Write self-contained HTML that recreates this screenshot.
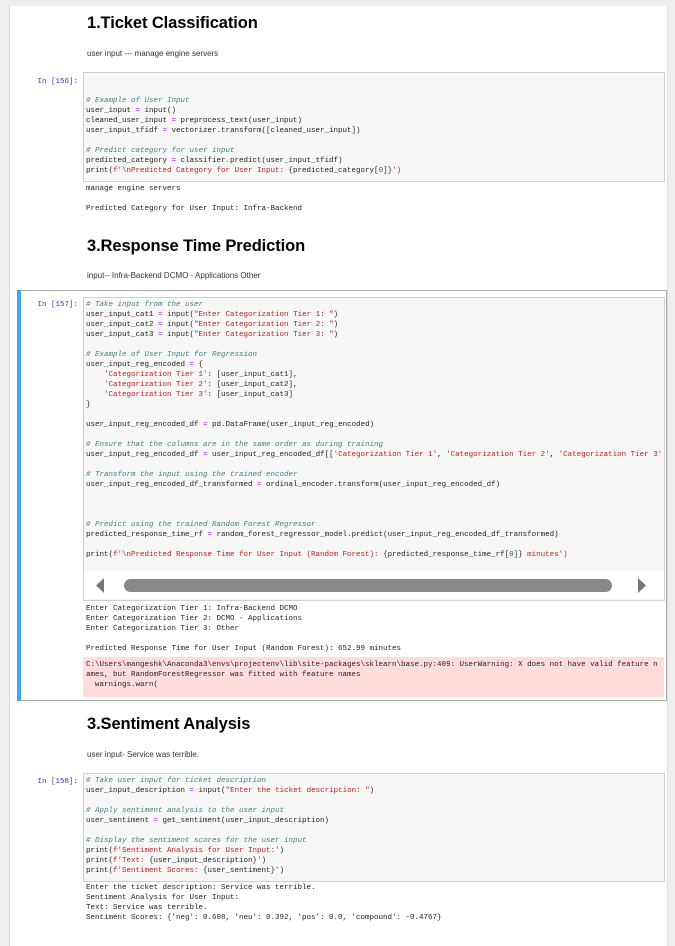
<!DOCTYPE html>
<html><head><meta charset="utf-8"><style>
body{margin:0;width:675px;height:932px;background:#eee;position:relative;overflow:hidden;font-family:"Liberation Sans",sans-serif}
.nb{position:absolute;left:9px;top:6px;width:657px;height:940px;background:#fff;border-left:1px solid #ddd;border-right:1px solid #ddd}
.a{position:absolute}
h1{position:absolute;margin:0;font-size:16.5px;font-weight:bold;color:#000;left:87px;line-height:20px;letter-spacing:-0.1px}
.p{position:absolute;left:87px;font-size:8px;color:#333;line-height:10px}
.box{position:absolute;left:83px;width:580px;background:#f7f7f7;border:1px solid #cfcfcf}
pre{position:absolute;margin:0;left:86px;font-family:"Liberation Mono",monospace;font-size:7.5px;line-height:10px;color:#222;white-space:pre}
.pr{position:absolute;font-family:"Liberation Mono",monospace;font-size:7.5px;color:#303f9f;right:597px;line-height:10px}
.c{color:#408080;font-style:italic}.s{color:#ba2121}.o{color:#a2f}.n{color:#080}
</style></head><body>
<div class="nb"></div>
<h1 style="top:13px">1.Ticket Classification</h1>
<div class="p" style="top:49px">user input --- manage engine servers</div>
<div class="pr" style="top:77px">In [156]:</div>
<div class="box" style="top:72px;height:108px"></div>
<pre style="top:76px">


<span class="c"># Example of User Input</span>
user_input <span class="o">=</span> input()
cleaned_user_input <span class="o">=</span> preprocess_text(user_input)
user_input_tfidf <span class="o">=</span> vectorizer.transform([cleaned_user_input])

<span class="c"># Predict category for user input</span>
predicted_category <span class="o">=</span> classifier.predict(user_input_tfidf)
print(<span class="s">f'\nPredicted Category for User Input: </span>{predicted_category[<span class="n">0</span>]}<span class="s">')</span></pre>
<pre style="top:184px">manage engine servers

Predicted Category for User Input: Infra-Backend</pre>

<h1 style="top:236px">3.Response Time Prediction</h1>
<div class="p" style="top:271px">input-- Infra-Backend DCMO - Applications Other</div>
<div class="a" style="left:17px;top:290px;width:648px;height:409px;border:1px solid #ababab;background:#fff"></div>
<div class="a" style="left:17px;top:290px;width:4px;height:411px;background:#42a5f5"></div>
<div class="pr" style="top:300px">In [157]:</div>
<div class="box" style="top:297px;height:302px;overflow:hidden"></div>
<pre style="top:300px;width:576px;overflow:hidden"><span class="c"># Take input from the user</span>
user_input_cat1 <span class="o">=</span> input(<span class="s">"Enter Categorization Tier 1: "</span>)
user_input_cat2 <span class="o">=</span> input(<span class="s">"Enter Categorization Tier 2: "</span>)
user_input_cat3 <span class="o">=</span> input(<span class="s">"Enter Categorization Tier 3: "</span>)

<span class="c"># Example of User Input for Regression</span>
user_input_reg_encoded <span class="o">=</span> {
    <span class="s">'Categorization Tier 1'</span>: [user_input_cat1],
    <span class="s">'Categorization Tier 2'</span>: [user_input_cat2],
    <span class="s">'Categorization Tier 3'</span>: [user_input_cat3]
}

user_input_reg_encoded_df <span class="o">=</span> pd.DataFrame(user_input_reg_encoded)

<span class="c"># Ensure that the columns are in the same order as during training</span>
user_input_reg_encoded_df <span class="o">=</span> user_input_reg_encoded_df[[<span class="s">'Categorization Tier 1'</span>, <span class="s">'Categorization Tier 2'</span>, <span class="s">'Categorization Tier 3'</span>]]

<span class="c"># Transform the input using the trained encoder</span>
user_input_reg_encoded_df_transformed <span class="o">=</span> ordinal_encoder.transform(user_input_reg_encoded_df)



<span class="c"># Predict using the trained Random Forest Regressor</span>
predicted_response_time_rf <span class="o">=</span> random_forest_regressor_model.predict(user_input_reg_encoded_df_transformed)

print(<span class="s">f'\nPredicted Response Time for User Input (Random Forest): </span>{predicted_response_time_rf[<span class="n">0</span>]}<span class="s"> minutes')</span></pre>
<div class="a" style="left:84px;top:571px;width:580px;height:28px;background:#fff"></div>
<svg class="a" style="left:94px;top:578px" width="12" height="15"><polygon points="10,0 10,15 2,7.5" fill="#777"/></svg>
<div class="a" style="left:124px;top:579px;width:488px;height:13px;border-radius:7px;background:#888"></div>
<svg class="a" style="left:636px;top:578px" width="12" height="15"><polygon points="2,0 2,15 10,7.5" fill="#777"/></svg>
<pre style="top:604px">Enter Categorization Tier 1: Infra-Backend DCMO
Enter Categorization Tier 2: DCMO - Applications
Enter Categorization Tier 3: Other

Predicted Response Time for User Input (Random Forest): 652.99 minutes</pre>
<div class="a" style="left:83px;top:657px;width:581px;height:40px;background:#fdd"></div>
<pre style="top:660px">C:\Users\mangeshk\Anaconda3\envs\projectenv\lib\site-packages\sklearn\base.py:409: UserWarning: X does not have valid feature n
ames, but RandomForestRegressor was fitted with feature names
  warnings.warn(</pre>

<h1 style="top:714px">3.Sentiment Analysis</h1>
<div class="p" style="top:750px">user input- Service was terrible.</div>
<div class="pr" style="top:777px">In [158]:</div>
<div class="box" style="top:773px;height:107px"></div>
<pre style="top:776px"><span class="c"># Take user input for ticket description</span>
user_input_description <span class="o">=</span> input(<span class="s">"Enter the ticket description: "</span>)

<span class="c"># Apply sentiment analysis to the user input</span>
user_sentiment <span class="o">=</span> get_sentiment(user_input_description)

<span class="c"># Display the sentiment scores for the user input</span>
print(<span class="s">f'Sentiment Analysis for User Input:'</span>)
print(<span class="s">f'Text: </span>{user_input_description}<span class="s">'</span>)
print(<span class="s">f'Sentiment Scores: </span>{user_sentiment}<span class="s">'</span>)</pre>
<pre style="top:883px">Enter the ticket description: Service was terrible.
Sentiment Analysis for User Input:
Text: Service was terrible.
Sentiment Scores: {'neg': 0.608, 'neu': 0.392, 'pos': 0.0, 'compound': -0.4767}</pre>
</body></html>
